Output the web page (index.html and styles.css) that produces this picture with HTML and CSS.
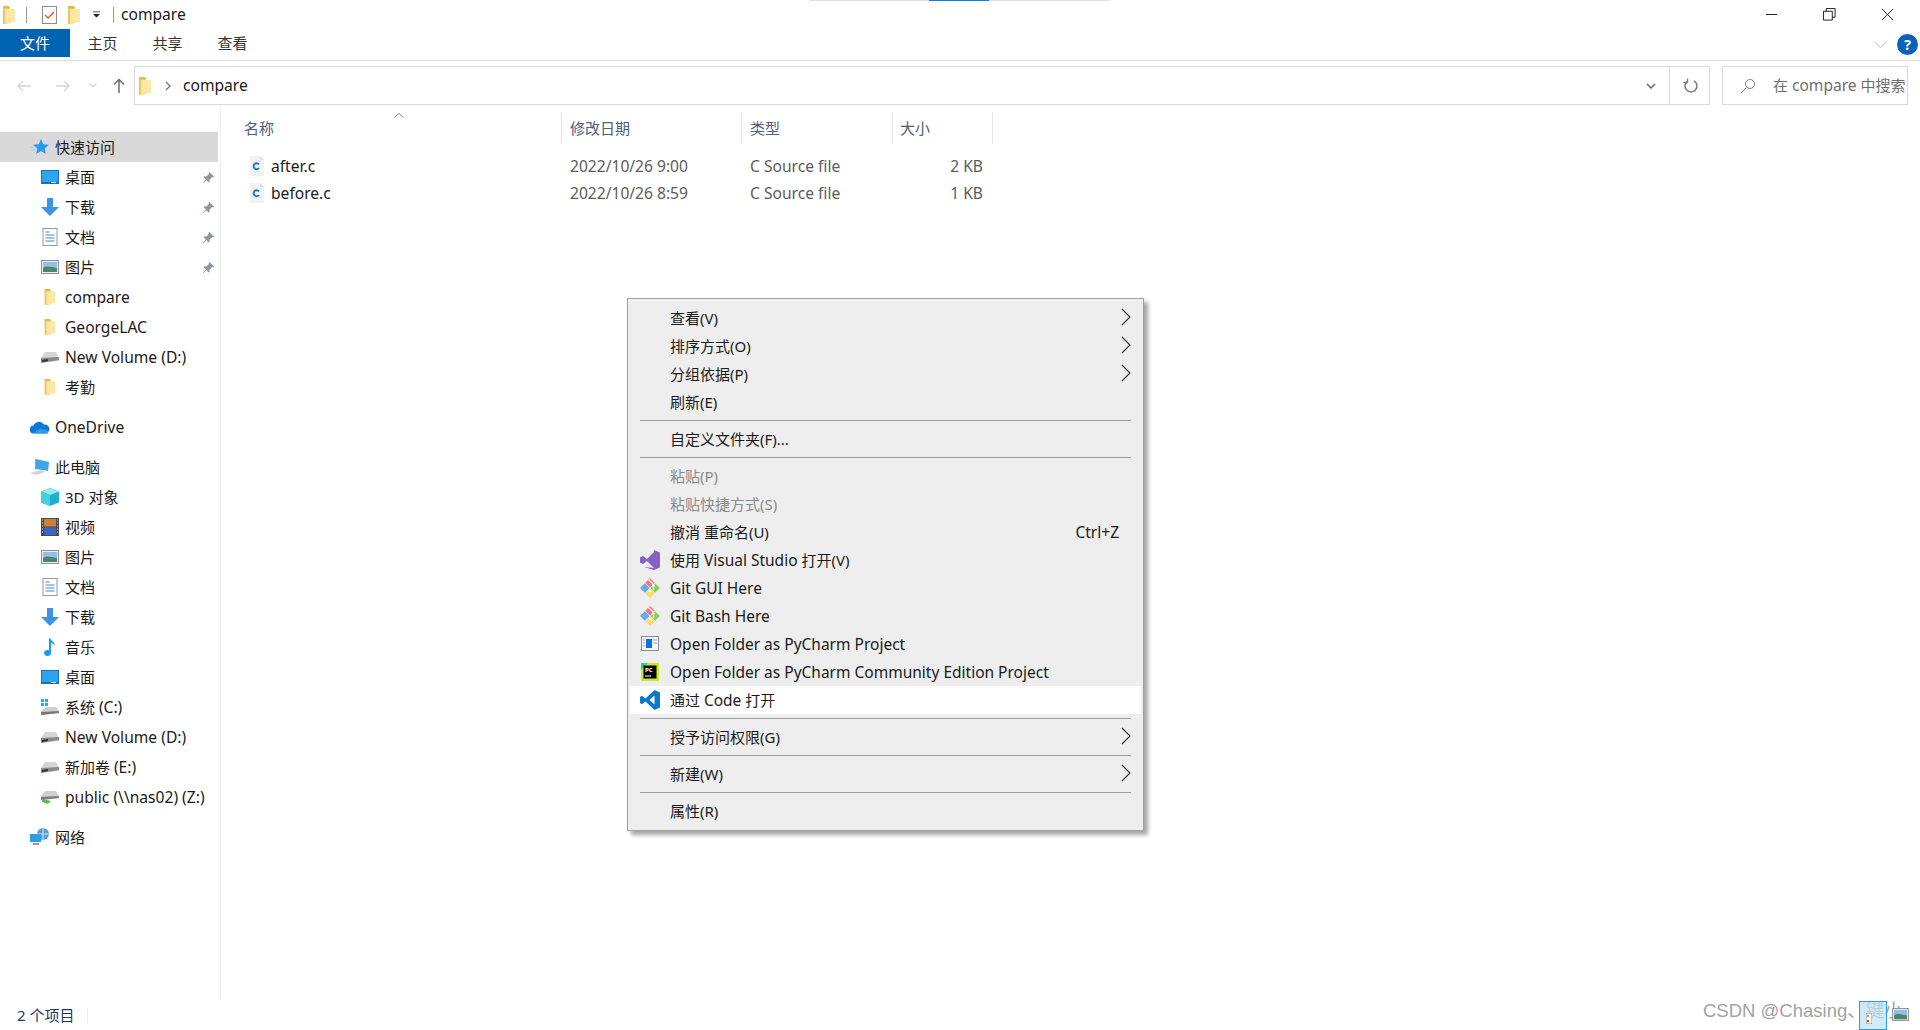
FILE: index.html
```html
<!DOCTYPE html>
<html lang="zh-CN">
<head>
    <meta charset="UTF-8">
    <title>compare</title>
    <link rel="stylesheet" href="styles.css">
</head>
<body>
    <svg class="defs" width="0" height="0">
        <defs>
            <symbol id="folder" viewBox="0 0 14 20">
                <path d="M1 1h6l1 2v15L1 19z" fill="#f2c55c"/>
                <path d="M3 4h10v13L3 18z" fill="#fde7a4"/>
                <path d="M1 1h6l1 2H1z" fill="#e8b84f"/>
            </symbol>
            <symbol id="pin" viewBox="0 0 14 14">
                <path d="M8 1l5 5-1 1-1-.5-3 3 .3 2-1 1-2.5-2.5L1.500 13 1 12.500l3.200-3.300L1.700 6.700l1-1 2 .3 3-3L7 2z" fill="#8f979e"/>
            </symbol>
            <symbol id="desktop" viewBox="0 0 18 14">
                <rect x="0" y="0" width="18" height="14" fill="#1e6fb8"/>
                <rect x="1" y="1" width="16" height="11" fill="#2fa3ee"/>
                <rect x="10" y="12" width="5" height="1" fill="#d6ecfb"/>
            </symbol>
            <symbol id="download" viewBox="0 0 18 18">
                <path d="M6 0h6v9h6l-9 9-9-9h6z" fill="#3d94e4"/>
            </symbol>
            <symbol id="doc" viewBox="0 0 15 18">
                <rect x=".5" y=".5" width="14" height="17" fill="#fdfdfd" stroke="#9a9a9a"/>
                <path d="M3 4h4M3 7h9M3 10h9M3 13h9" stroke="#3c8fd2"/>
            </symbol>
            <symbol id="picture" viewBox="0 0 18 14">
                <rect x=".5" y=".5" width="17" height="13" fill="#eee" stroke="#8f8f8f"/>
                <rect x="2" y="2" width="14" height="10" fill="#8cc2ea"/>
                <path d="M2 8c4-3 8-1 14 0v4H2z" fill="#4f8468"/>
            </symbol>
            <symbol id="drive" viewBox="0 0 18 12">
                <path d="M4 1h11l3 6v3l-18 2V7z" fill="#d5d5d5"/>
                <path d="M0 7l18-1v3L0 12z" fill="#8a8a8a"/>
                <path d="M1 9l6-1v2l-6 1z" fill="#333"/>
            </symbol>
            <symbol id="c-file" viewBox="0 0 16 20">
                <path d="M1 0h10l4 4v16H1z" fill="#f1f2f4"/>
                <path d="M11 0l4 4h-4z" fill="#dcdfe3"/>
                <path d="M10 8.300A3 3 0 1 0 10 12" fill="none" stroke="#2a78c4" stroke-width="2"/>
            </symbol>
            <symbol id="chev" viewBox="0 0 10 18">
                <path d="M1 1l8 8-8 8" fill="none" stroke="#333" stroke-width="1.100"/>
            </symbol>
            <symbol id="git" viewBox="0 0 20 20">
                <g transform="rotate(45 10 10)">
                    <rect x="3" y="3" width="6.700" height="6.700" fill="#f0777a"/>
                    <rect x="10.300" y="3" width="6.700" height="6.700" fill="#86d05a"/>
                    <rect x="3" y="10.300" width="6.700" height="6.700" fill="#6aa5f0"/>
                    <rect x="10.300" y="10.300" width="6.700" height="6.700" fill="#fbdc6d"/>
                </g>
                <path d="M8.500 1.500l5 5M13.500 8v4" stroke="#fff" stroke-width="1.200"/>
                <circle cx="13.500" cy="7.500" r="1.300" fill="#fff"/>
                <circle cx="10" cy="13" r="1.300" fill="#fff"/>
            </symbol>
        </defs>
    </svg>

    <div class="window">
        <div class="progress"><span></span></div>

        <header class="titlebar">
            <svg class="qa-folder"><use href="#folder"/></svg>
            <i class="qa-sep"></i>
            <svg class="qa-check" viewBox="0 0 15 18">
                <rect x=".5" y=".5" width="14" height="17" fill="#fff" stroke="#8c8c8c"/>
                <path d="M3 9l3 3 6-6" fill="none" stroke="#e8551e" stroke-width="1.300"/>
            </svg>
            <svg class="qa-folder second"><use href="#folder"/></svg>
            <svg class="qa-drop" viewBox="0 0 8 7"><path d="M0 0h8v1H0zM0 3h8L4 7z" fill="#222"/></svg>
            <i class="qa-sep last"></i>
            <span class="title en">compare</span>
            <div class="winbtns">
                <svg viewBox="0 0 14 14"><path d="M1 7h12" stroke="#111"/></svg>
                <svg viewBox="0 0 14 14"><path d="M.5 3.500h9.500v9.500H.5zM3.500 3.500V.5h9.500v9.500h-3" fill="none" stroke="#111"/></svg>
                <svg viewBox="0 0 14 14"><path d="M1 1l12 12M13 1L1 13" stroke="#111"/></svg>
            </div>
        </header>

        <nav class="ribbon">
            <span class="tab active">文件</span>
            <span class="tab">主页</span>
            <span class="tab">共享</span>
            <span class="tab">查看</span>
            <svg class="ribbon-chev" viewBox="0 0 14 8"><path d="M1 1l6 6 6-6" fill="none" stroke="#b5b5b5"/></svg>
            <span class="help">?</span>
        </nav>

        <div class="navbar">
            <svg class="nav-ico" viewBox="0 0 16 14"><path d="M15 7H2M7 2L2 7l5 5" fill="none" stroke="#d4d4d4" stroke-width="1.300"/></svg>
            <svg class="nav-ico fwd" viewBox="0 0 16 14"><path d="M1 7h13M9 2l5 5-5 5" fill="none" stroke="#d4d4d4" stroke-width="1.300"/></svg>
            <svg class="nav-ico small" viewBox="0 0 8 5"><path d="M.5.500L4 4 7.500.500" fill="none" stroke="#d4d4d4" stroke-width="1.200"/></svg>
            <svg class="nav-ico up" viewBox="0 0 12 15"><path d="M6 15V2M1 6.500L6 1.500l5 5" fill="none" stroke="#6e6e6e" stroke-width="1.500"/></svg>
            <div class="address">
                <svg class="addr-folder"><use href="#folder"/></svg>
                <svg class="addr-sep" viewBox="0 0 6 10"><path d="M1 1l4 4-4 4" fill="none" stroke="#777" stroke-width="1.300"/></svg>
                <span class="addr-text en">compare</span>
                <svg class="addr-drop" viewBox="0 0 10 6"><path d="M1 1l4 4 4-4" fill="none" stroke="#666" stroke-width="1.500"/></svg>
                <div class="refresh">
                    <svg viewBox="0 0 16 16"><path d="M11 2.800A6 6 0 1 1 5 2.800" fill="none" stroke="#7c7c7c" stroke-width="1.500"/><path d="M4.500.5v4h-4" fill="none" stroke="#7c7c7c" stroke-width="1.300"/></svg>
                </div>
            </div>
            <div class="search">
                <svg viewBox="0 0 16 16"><circle cx="10" cy="6" r="4.500" fill="none" stroke="#7c7c7c"/><path d="M6.500 9.500L1 15" stroke="#7c7c7c"/></svg>
                <span>在 <span class="en">compare</span> 中搜索</span>
            </div>
        </div>

        <div class="main">
            <aside class="sidebar">
                <div class="group">
                    <div class="side-row top selected">
                        <svg class="ico" viewBox="0 0 20 18"><path d="M11 1l2.300 5.200 5.700.5-4.400 3.800 1.400 5.500-5-3-5 3 1.400-5.500L3 6.700l5.700-.5z" fill="#2a9be8"/><path d="M0 9h4M1 12h4" stroke="#9fd0f2"/></svg>
                        <span>快速访问</span>
                    </div>
                    <div class="side-row"><svg class="ico"><use href="#desktop"/></svg><span>桌面</span><svg class="pin"><use href="#pin"/></svg></div>
                    <div class="side-row"><svg class="ico"><use href="#download"/></svg><span>下载</span><svg class="pin"><use href="#pin"/></svg></div>
                    <div class="side-row"><svg class="ico"><use href="#doc"/></svg><span>文档</span><svg class="pin"><use href="#pin"/></svg></div>
                    <div class="side-row"><svg class="ico"><use href="#picture"/></svg><span>图片</span><svg class="pin"><use href="#pin"/></svg></div>
                    <div class="side-row"><svg class="ico"><use href="#folder"/></svg><span class="en">compare</span></div>
                    <div class="side-row"><svg class="ico"><use href="#folder"/></svg><span class="en">GeorgeLAC</span></div>
                    <div class="side-row"><svg class="ico"><use href="#drive"/></svg><span class="en">New Volume (D:)</span></div>
                    <div class="side-row"><svg class="ico"><use href="#folder"/></svg><span>考勤</span></div>
                </div>
                <div class="group">
                    <div class="side-row top">
                        <svg class="ico" viewBox="0 0 20 13"><path d="M4 13a4 4 0 0 1-.5-8A6 6 0 0 1 14 4a4.500 4.500 0 0 1 1.500 9z" fill="#0f78d4"/><path d="M5 13c0-3 4-5 8-4 4 0 6 2 5 4z" fill="#2aa0ea"/></svg>
                        <span class="en">OneDrive</span>
                    </div>
                </div>
                <div class="group">
                    <div class="side-row top">
                        <svg class="ico" viewBox="0 0 20 16"><path d="M6 0l13 3-1 9-12-2z" fill="#3fa5e8"/><path d="M5 0l1 0v10l-1 1z" fill="#8fa3b1"/><path d="M0 14l11-3 4 2-9 3z" fill="#cfd4d8"/></svg>
                        <span>此电脑</span>
                    </div>
                    <div class="side-row">
                        <svg class="ico" viewBox="0 0 18 18"><path d="M9 0l9 3.500v11L9 18l-9-3.500v-11z" fill="#1fb0cf"/><path d="M9 0l9 3.500L9 7 0 3.500z" fill="#8ee9f0"/><path d="M0 3.500L9 7v11L0 14.500z" fill="#47cfe0"/></svg>
                        <span>3D 对象</span>
                    </div>
                    <div class="side-row">
                        <svg class="ico" viewBox="0 0 18 18"><rect width="18" height="18" fill="#4a4a4a"/><rect x="3" y="1" width="12" height="7.500" fill="#c8813a"/><rect x="3" y="9.500" width="12" height="7.500" fill="#3a66c4"/><path d="M1 2h1M1 5h1M1 8h1M1 11h1M1 14h1M16 2h1M16 5h1M16 8h1M16 11h1M16 14h1" stroke="#ddd"/></svg>
                        <span>视频</span>
                    </div>
                    <div class="side-row"><svg class="ico"><use href="#picture"/></svg><span>图片</span></div>
                    <div class="side-row"><svg class="ico"><use href="#doc"/></svg><span>文档</span></div>
                    <div class="side-row"><svg class="ico"><use href="#download"/></svg><span>下载</span></div>
                    <div class="side-row">
                        <svg class="ico" viewBox="0 0 18 18"><path d="M9 0c1 3 5 4 5 8-1-2-3-3-4-3v10a3.500 3 0 1 1-2-2.700V0z" fill="#1a9bf0"/></svg>
                        <span>音乐</span>
                    </div>
                    <div class="side-row"><svg class="ico"><use href="#desktop"/></svg><span>桌面</span></div>
                    <div class="side-row">
                        <svg class="ico" viewBox="0 0 18 18"><path d="M0 1h3v3H0zM4 1h3v3H4zM0 5h3v3H0zM4 5h3v3H4z" fill="#11b4ef"/><path d="M5 9h10l3 4v2l-18 2v-4z" fill="#cfcfcf"/><path d="M0 14l18-1v2L0 17z" fill="#777"/></svg>
                        <span>系统 <span class="en">(C:)</span></span>
                    </div>
                    <div class="side-row"><svg class="ico"><use href="#drive"/></svg><span class="en">New Volume (D:)</span></div>
                    <div class="side-row"><svg class="ico"><use href="#drive"/></svg><span>新加卷 <span class="en">(E:)</span></span></div>
                    <div class="side-row">
                        <svg class="ico" viewBox="0 0 18 14"><path d="M4 1h11l3 5v2L0 10V6z" fill="#cfcfcf"/><path d="M0 7l18-1v2L0 10z" fill="#7c7c7c"/><path d="M1 9l9 2-3 3-6-2z" fill="#5cb85c"/></svg>
                        <span class="en">public (\\nas02) (Z:)</span>
                    </div>
                </div>
                <div class="group">
                    <div class="side-row top">
                        <svg class="ico" viewBox="0 0 20 18"><circle cx="13" cy="6" r="6" fill="#5f9fd0"/><path d="M13 0v12M7 6h12" stroke="#cfe3f1"/><rect x="0" y="6" width="11" height="8" fill="#2f9be0"/><path d="M3 16h6" stroke="#9a9a9a" stroke-width="2"/></svg>
                        <span>网络</span>
                    </div>
                </div>
            </aside>

            <section class="files">
                <div class="col-head">
                    <span class="col name">名称<svg class="sort" viewBox="0 0 10 5"><path d="M.5 4.500L5 .5l4.500 4" fill="none" stroke="#888"/></svg></span>
                    <span class="col date">修改日期</span>
                    <span class="col type">类型</span>
                    <span class="col size">大小</span>
                </div>
                <div class="file-row en">
                    <span class="cell name"><svg><use href="#c-file"/></svg>after.c</span>
                    <span class="cell date">2022/10/26 9:00</span>
                    <span class="cell type">C Source file</span>
                    <span class="cell size">2 KB</span>
                </div>
                <div class="file-row en">
                    <span class="cell name"><svg><use href="#c-file"/></svg>before.c</span>
                    <span class="cell date">2022/10/26 8:59</span>
                    <span class="cell type">C Source file</span>
                    <span class="cell size">1 KB</span>
                </div>
            </section>
        </div>

        <footer class="statusbar"><span>2 个项目</span></footer>
    </div>

    <!-- right click menu -->
    <div class="menu">
        <div class="mi">查看(V)<svg class="arrow"><use href="#chev"/></svg></div>
        <div class="mi">排序方式(O)<svg class="arrow"><use href="#chev"/></svg></div>
        <div class="mi">分组依据(P)<svg class="arrow"><use href="#chev"/></svg></div>
        <div class="mi">刷新(E)</div>
        <hr>
        <div class="mi">自定义文件夹(F)...</div>
        <hr>
        <div class="mi off">粘贴(P)</div>
        <div class="mi off">粘贴快捷方式(S)</div>
        <div class="mi">撤消 重命名(U)<span class="shortcut en">Ctrl+Z</span></div>
        <div class="mi">
            <svg class="mi-ico" viewBox="0 0 20 20"><path d="M14 0l6 2.500v15L14 20 4 17l10 1V2L7 9 3 6 0 7.500v5L3 14l4-3 7 7z" fill="#8661c5"/><path d="M3 7.500v5L6 10z" fill="#8661c5"/></svg>
            <span>使用 <span class="en">Visual Studio</span> 打开(V)</span>
        </div>
        <div class="mi"><svg class="mi-ico"><use href="#git"/></svg><span class="en">Git GUI Here</span></div>
        <div class="mi"><svg class="mi-ico"><use href="#git"/></svg><span class="en">Git Bash Here</span></div>
        <div class="mi">
            <svg class="mi-ico" viewBox="0 0 20 20"><rect x="1.500" y="2.500" width="17" height="14" fill="#f5f5f5" stroke="#8d8d8d"/><rect x="6" y="5" width="6" height="9" fill="#0a72d8"/><path d="M3 6h2M3 9h2M3 12h2M13 6h4M13 9h4" stroke="#9ab"/></svg>
            <span class="en">Open Folder as PyCharm Project</span>
        </div>
        <div class="mi">
            <svg class="mi-ico" viewBox="0 0 20 20"><path d="M1 1h18v18H1z" fill="#c9e82a"/><path d="M1 1h7L1 8z" fill="#21d789"/><rect x="3.500" y="3.500" width="13" height="13" fill="#000"/><path d="M5 14h6" stroke="#fff"/><text x="5" y="10" class="pc">PC</text></svg>
            <span class="en">Open Folder as PyCharm Community Edition Project</span>
        </div>
        <div class="mi hover">
            <svg class="mi-ico" viewBox="0 0 20 20"><path d="M14.500 0L20 2.500v15L14.500 20 5.500 11.500 2 14.300 0 13V7l2-1.300 3.500 2.800zM14.500 5.500L9.500 10l5 4.500z" fill="#0a78cf"/></svg>
            <span>通过 <span class="en">Code</span> 打开</span>
        </div>
        <hr>
        <div class="mi">授予访问权限(G)<svg class="arrow"><use href="#chev"/></svg></div>
        <hr>
        <div class="mi">新建(W)<svg class="arrow"><use href="#chev"/></svg></div>
        <hr>
        <div class="mi">属性(R)</div>
    </div>

    <!-- csdn watermark + drag ghost in the corner -->
    <div class="watermark">CSDN @Chasing、键小</div>
    <div class="ghost">
        <svg viewBox="0 0 6 11"><rect width="6" height="11" fill="#fff" stroke="#888"/><path d="M1 2h2v2H1z" fill="#d8a52a"/><path d="M1 7h2v2H1z" fill="#c8402a"/></svg>
    </div>
    <svg class="ghost-pic"><use href="#picture"/></svg>
</body>
</html>
```

FILE: styles.css
```css
* {
    box-sizing: border-box;
}

body {
    margin: 0;
    height: 100vh;
    overflow: hidden;
    background-color: #fff;
    color: #1a1a1a;
    font-family: "Noto Sans", "Noto Sans CJK SC", sans-serif;
    font-size: 15px;
    line-height: 20px;
}

/* latin runs are a little bigger than the CJK ones */
.en {
    font-size: 15.6px;
}

.mi .en {
    font-size: 15.5px;
}

.defs {
    position: absolute;
}

.window {
    height: 100%;
    display: flex;
    flex-direction: column;
    position: relative;
}

/* thin loading strip at the very top */
.progress {
    position: absolute;
    top: 0;
    left: 809px;
    width: 301px;
    height: 1px;
    background-color: #e2e2e2;
}

.progress span {
    display: block;
    width: 60px;
    height: 1px;
    margin-left: 120px;
    background-color: #0a7fe0;
}

/* title bar */
.titlebar {
    height: 29px;
    display: flex;
    align-items: center;
    flex-shrink: 0;
}

.qa-folder {
    width: 14px;
    height: 20px;
    margin-left: 2px;
}

.qa-folder.second {
    margin-left: 10px;
}

.qa-sep {
    width: 1px;
    height: 16px;
    margin-left: 10px;
    background-color: #9a9a9a;
}

.qa-sep.last {
    margin-left: 13px;
}

.qa-check {
    width: 15px;
    height: 18px;
    margin-left: 15px;
}

.qa-drop {
    width: 7px;
    height: 7px;
    margin-left: 12px;
}

.title {
    margin-left: 7px;
    padding-bottom: 2px;
}

.winbtns {
    margin-left: auto;
    display: flex;
    gap: 45px;
    padding-right: 26px;
}

.winbtns svg {
    width: 13px;
    height: 13px;
}

/* ribbon tabs */
.ribbon {
    height: 32px;
    display: flex;
    align-items: flex-start;
    border-bottom: 1px solid #dcdcdc;
    flex-shrink: 0;
}

.tab {
    width: 65px;
    height: 28px;
    line-height: 28px;
    text-align: center;
    color: #333;
}

.tab.active {
    width: 70px;
    background-color: #0063b1;
    color: #fff;
}

.ribbon-chev {
    width: 13px;
    height: 8px;
    margin: 12px 0 0 auto;
}

.help {
    width: 21px;
    height: 21px;
    margin: 5px 2px 0 10px;
    border-radius: 50%;
    background-color: #0a63b8;
    color: #fff;
    font-size: 14px;
    font-weight: bold;
    line-height: 21px;
    text-align: center;
}

/* back / forward / address row */
.navbar {
    height: 39px;
    margin-top: 5px;
    display: flex;
    align-items: center;
    flex-shrink: 0;
}

.nav-ico {
    width: 16px;
    height: 14px;
    margin-left: 16px;
}

.nav-ico.fwd {
    margin-left: 23px;
}

.nav-ico.small {
    width: 8px;
    height: 5px;
    margin-left: 18px;
}

.nav-ico.up {
    width: 12px;
    height: 15px;
    margin-left: 16px;
}

.address {
    width: 1576px;
    height: 39px;
    margin-left: 9px;
    display: flex;
    align-items: center;
    border: 1px solid #d9d9d9;
}

.addr-folder {
    width: 14px;
    height: 20px;
    margin-left: 3px;
}

.addr-sep {
    width: 6px;
    height: 10px;
    margin-left: 13px;
}

.addr-text {
    margin-left: 12px;
    padding-bottom: 2px;
}

.addr-drop {
    width: 10px;
    height: 6px;
    margin-left: auto;
    margin-right: 13px;
}

.refresh {
    width: 40px;
    height: 100%;
    display: flex;
    align-items: center;
    justify-content: center;
    border-left: 1px solid #d9d9d9;
}

.refresh svg {
    width: 16px;
    height: 16px;
    margin-left: 2px;
}

.search {
    width: 186px;
    height: 39px;
    margin-left: 12px;
    display: flex;
    align-items: center;
    border: 1px solid #d9d9d9;
    color: #6d6d6d;
    white-space: nowrap;
    overflow: hidden;
}

.search > span {
    padding-bottom: 2px;
}

.search svg {
    width: 16px;
    height: 16px;
    margin: 0 17px 0 17px;
    flex-shrink: 0;
}

/* sidebar and file list */
.main {
    flex: 1;
    display: flex;
    min-height: 0;
}

.sidebar {
    width: 221px;
    padding-top: 27px;
    border-right: 1px solid #f0f0f0;
    flex-shrink: 0;
}

.group + .group {
    margin-top: 10px;
}

.side-row {
    width: 218px;
    height: 30px;
    display: flex;
    align-items: center;
    padding-left: 41px;
    white-space: nowrap;
    position: relative;
}

.side-row.top {
    padding-left: 30px;
}

.side-row.selected {
    background-color: #d9d9d9;
}

.ico {
    width: 18px;
    height: 18px;
    margin-right: 6px;
    flex-shrink: 0;
}

.side-row.top .ico {
    width: 20px;
    margin-right: 5px;
}

.pin {
    width: 13px;
    height: 13px;
    position: absolute;
    right: 3px;
    top: 9px;
}

.files {
    flex: 1;
    padding-top: 7px;
}

.col-head {
    height: 32px;
    display: flex;
    color: #4c607a;
    line-height: 32px;
}

.col {
    position: relative;
    border-right: 1px solid #e5e5e5;
    padding-left: 8px;
}

.col.name,
.cell.name {
    width: 341px;
}

.col.name {
    padding-left: 23px;
}

.col.date,
.cell.date {
    width: 180px;
}

.col.type,
.cell.type {
    width: 151px;
}

.col.size,
.cell.size {
    width: 100px;
}

.col.size {
    padding-left: 7px;
}

.sort {
    width: 10px;
    height: 5px;
    position: absolute;
    left: 173px;
    top: 1px;
}

.file-row {
    height: 27px;
    display: flex;
    align-items: center;
    color: #5c5c5c;
}

.col-head + .file-row {
    margin-top: 8px;
}

.cell {
    padding-left: 8px;
    white-space: nowrap;
}

.cell.name {
    display: flex;
    align-items: center;
    padding-left: 28px;
    color: #1a1a1a;
}

.cell.name svg {
    width: 16px;
    height: 20px;
    margin-right: 6px;
}

.cell.size {
    padding: 0 10px 0 0;
    text-align: right;
}

.statusbar {
    height: 30px;
    flex-shrink: 0;
    padding-left: 17px;
    color: #1f3a5c;
    line-height: 30px;
}

.statusbar span {
    display: inline-block;
    width: 71px;
    height: 15px;
    line-height: 15px;
    border-right: 1px solid #ececec;
}

/* context menu */
.menu {
    position: absolute;
    left: 627px;
    top: 298px;
    width: 517px;
    height: 533px;
    padding: 5px 2px 0;
    background-color: #eee;
    border: 1px solid #a0a0a0;
    box-shadow: 4px 4px 4px rgba(0, 0, 0, 0.35);
}

.mi {
    height: 28px;
    display: flex;
    align-items: center;
    padding-left: 40px;
    color: #1a1a1a;
    white-space: nowrap;
    position: relative;
}

.mi.off {
    color: #8a8a8a;
}

.mi.hover {
    background-color: #fff;
}

.menu hr {
    height: 1px;
    margin: 4px 10px 4px 10px;
    border: 0;
    background-color: #a0a0a0;
}

.mi-ico {
    width: 20px;
    height: 20px;
    position: absolute;
    left: 10px;
    top: 4px;
}

.arrow {
    width: 10px;
    height: 18px;
    position: absolute;
    right: 10px;
    top: 4px;
}

.shortcut {
    margin-left: auto;
    margin-right: 22px;
}

.pc {
    fill: #fff;
    font-size: 6px;
    font-weight: bold;
}

/* watermark over the corner */
.watermark {
    position: absolute;
    left: 1703px;
    top: 1001px;
    color: #a3a3a3;
    font-family: "Liberation Sans", "Noto Sans CJK SC", sans-serif;
    font-size: 18.500px;
    white-space: nowrap;
}

.ghost {
    position: absolute;
    left: 1859px;
    top: 1001px;
    width: 28px;
    height: 29px;
    background-color: rgba(190, 225, 245, 0.7);
    border: 1px solid #2a9fe0;
}

.ghost svg {
    position: absolute;
    left: 6px;
    top: 11px;
    width: 6px;
    height: 11px;
}

.ghost-pic {
    position: absolute;
    left: 1892px;
    top: 1008px;
    width: 17px;
    height: 13px;
}
```
